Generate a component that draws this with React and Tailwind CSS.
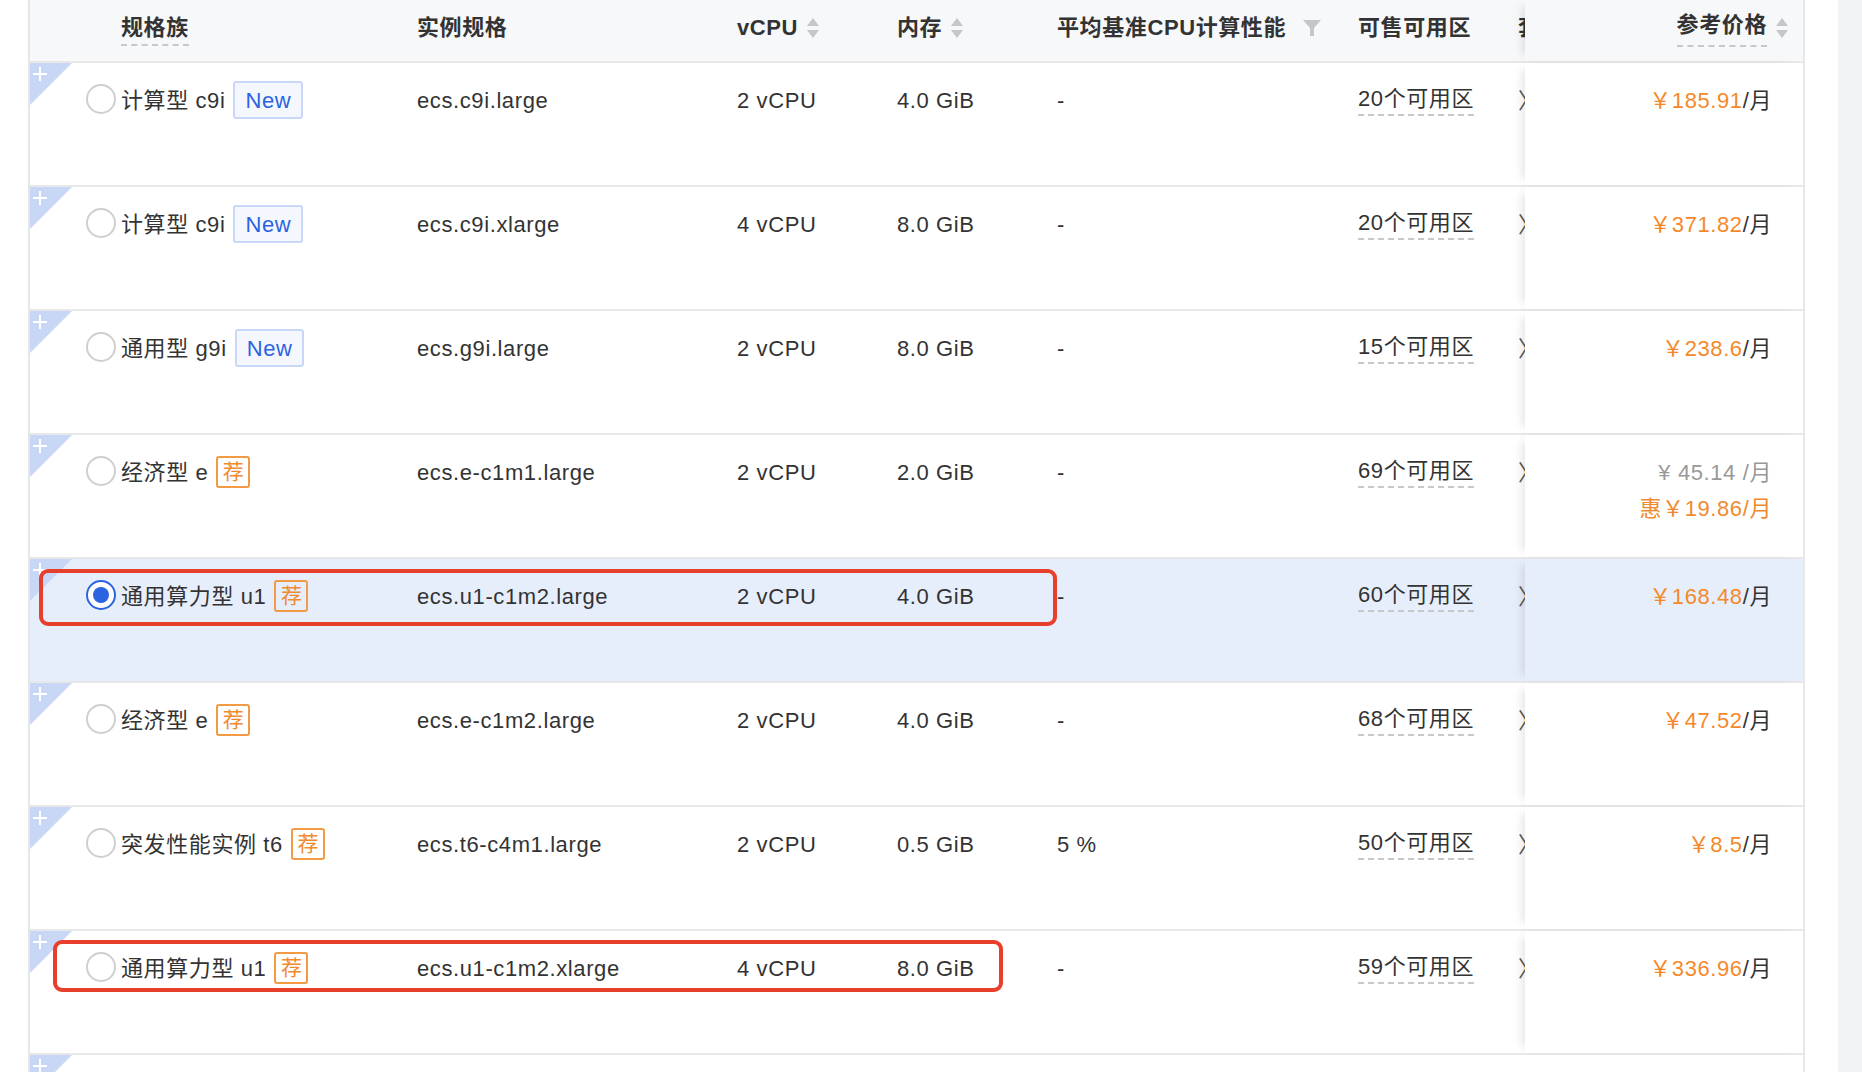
import React from "react";

const rows = [
  { fam: "计算型 c9i", tag: "new", spec: "ecs.c9i.large", cpu: "2 vCPU", mem: "4.0 GiB", perf: "-", zone: "20个可用区", price: "185.91" },
  { fam: "计算型 c9i", tag: "new", spec: "ecs.c9i.xlarge", cpu: "4 vCPU", mem: "8.0 GiB", perf: "-", zone: "20个可用区", price: "371.82" },
  { fam: "通用型 g9i", tag: "new", spec: "ecs.g9i.large", cpu: "2 vCPU", mem: "8.0 GiB", perf: "-", zone: "15个可用区", price: "238.6" },
  { fam: "经济型 e", tag: "rec", spec: "ecs.e-c1m1.large", cpu: "2 vCPU", mem: "2.0 GiB", perf: "-", zone: "69个可用区", price: "45.14", promo: "19.86" },
  { fam: "通用算力型 u1", tag: "rec", spec: "ecs.u1-c1m2.large", cpu: "2 vCPU", mem: "4.0 GiB", perf: "-", zone: "60个可用区", price: "168.48", sel: true, box: "w-[1018px] h-[57px] top-[10px] left-[9px]" },
  { fam: "经济型 e", tag: "rec", spec: "ecs.e-c1m2.large", cpu: "2 vCPU", mem: "4.0 GiB", perf: "-", zone: "68个可用区", price: "47.52" },
  { fam: "突发性能实例 t6", tag: "rec", spec: "ecs.t6-c4m1.large", cpu: "2 vCPU", mem: "0.5 GiB", perf: "5 %", zone: "50个可用区", price: "8.5" },
  { fam: "通用算力型 u1", tag: "rec", spec: "ecs.u1-c1m2.xlarge", cpu: "4 vCPU", mem: "8.0 GiB", perf: "-", zone: "59个可用区", price: "336.96", box: "w-[950px] h-[52px] top-[9px] left-[23px]" },
];

const Sort = () => (
  <svg width="14" height="24" viewBox="0 0 14 24" className="ml-2">
    <path d="M7 2 L13 10 H1 Z" fill="#c4c6cc" />
    <path d="M7 22 L13 14 H1 Z" fill="#c4c6cc" />
  </svg>
);

const Corner = () => (
  <div className="absolute left-0 top-0 w-[42px] h-[42px]">
    <svg width="42" height="42" viewBox="0 0 42 42">
      <path d="M0 0 H42 L0 42 Z" fill="#c9d7f6" />
      <path d="M10 4 V18 M3 11 H17" stroke="#fff" strokeWidth="2" />
    </svg>
  </div>
);

export default function App() {
  return (
    <div className="w-[1862px] h-[1072px] overflow-hidden bg-white flex text-[#333] tracking-[0.6px]" style={{ fontFamily: '"Liberation Sans","Noto Sans CJK SC",sans-serif' }}>
      <div className="w-[30px] shrink-0 border-r-2 border-[#e6e6e6]" />
      <div className="w-[1775px] shrink-0 border-r-2 border-[#e8e8e8] flex flex-col">
        <div className="h-[63px] shrink-0 flex bg-[#f7f8fa] border-b-2 border-[#e8e8e8] text-[22px] font-semibold">
          <div className="w-[1495px] overflow-hidden flex items-center pb-[6px]">
            <div className="w-[91px] shrink-0" />
            <div className="w-[296px] shrink-0"><span className="border-b-2 border-dashed border-[#c8c8c8] pb-1">规格族</span></div>
            <div className="w-[320px] shrink-0">实例规格</div>
            <div className="w-[160px] shrink-0 flex items-center">vCPU<Sort /></div>
            <div className="w-[160px] shrink-0 flex items-center">内存<Sort /></div>
            <div className="w-[301px] shrink-0 flex items-center">平均基准CPU计算性能
              <svg width="20" height="20" viewBox="0 0 20 20" className="ml-4"><path d="M1 2 H19 L12 10 V18 H8 V10 Z" fill="#c4c6cc" /></svg>
            </div>
            <div className="w-[160px] shrink-0">可售可用区</div>
            <div className="shrink-0">套餐</div>
          </div>
          <div className="flex-1 flex items-center justify-end pr-[14px] pb-[6px] shadow-[-8px_0_10px_-6px_rgba(0,0,0,0.12)]">
            <span className="border-b-2 border-dashed border-[#c8c8c8] pb-1">参考价格</span>
            <Sort />
          </div>
        </div>
        {rows.map((r, i) => (
          <div key={i} className={`relative h-[124px] shrink-0 flex border-b-2 border-[#e8e8e8] text-[22px] ${r.sel ? "bg-[#e7eefb]" : "bg-white"}`}>
            <Corner />
            <div className="w-[1495px] overflow-hidden flex items-start pt-[20px]">
              <div className="w-[91px] shrink-0 flex justify-end pr-[5px] pt-[1px]">
                {r.sel ? (
                  <div className="w-[30px] h-[30px] rounded-full border-2 border-[#2b63e0] bg-white flex items-center justify-center">
                    <div className="w-[16px] h-[16px] rounded-full bg-[#2b63e0]" />
                  </div>
                ) : (
                  <div className="w-[30px] h-[30px] rounded-full border-2 border-[#cfcfcf] bg-white" />
                )}
              </div>
              <div className="w-[296px] shrink-0 flex items-center h-[34px]">
                <span>{r.fam}</span>
                {r.tag === "new" ? (
                  <span className="ml-2 h-[38px] px-[10px] flex items-center border-2 border-[#c9d8f7] rounded-[3px] bg-[#f4f7fe] text-[#2b63e0]">New</span>
                ) : (
                  <span className="ml-2 w-[34px] h-[32px] flex items-center justify-center border-2 border-[#f39a45] rounded-[3px] text-[#f08a2e] text-[21px] tracking-normal">荐</span>
                )}
              </div>
              <div className="w-[320px] shrink-0 h-[34px] flex items-center">{r.spec}</div>
              <div className="w-[160px] shrink-0 h-[34px] flex items-center">{r.cpu}</div>
              <div className="w-[160px] shrink-0 h-[34px] flex items-center">{r.mem}</div>
              <div className="w-[301px] shrink-0 h-[34px] flex items-center">{r.perf}</div>
              <div className="w-[160px] shrink-0 h-[34px] flex items-center"><span className="border-b-2 border-dashed border-[#c8c8c8] leading-[30px]">{r.zone}</span></div>
              <div className="shrink-0 h-[34px] flex items-center text-[#555]">〉</div>
            </div>
            <div className="flex-1 flex flex-col items-end pt-[20px] pr-[31px] shadow-[-8px_0_10px_-6px_rgba(0,0,0,0.12)]">
              {r.promo ? (
                <>
                  <div className="h-[34px] flex items-center text-[#999]">¥ {r.price} /月</div>
                  <div className="h-[34px] mt-[2px] flex items-center text-[#f08a2e]">惠￥{r.promo}/月</div>
                </>
              ) : (
                <div className="h-[34px] flex items-center"><span className="text-[#f5892a]">￥{r.price}</span>/月</div>
              )}
            </div>
            {r.box && <div className={`absolute ${r.box} border-4 border-[#e83e2c] rounded-[9px]`} />}
          </div>
        ))}
        <div className="relative flex-1 bg-white"><Corner /></div>
      </div>
      <div className="w-[33px] shrink-0" />
      <div className="flex-1 bg-[#f2f3f7]" />
    </div>
  );
}
